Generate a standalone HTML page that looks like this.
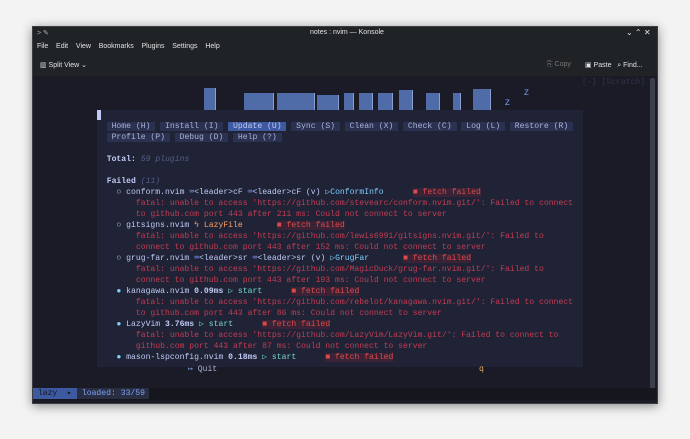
<!DOCTYPE html>
<html><head><meta charset="utf-8"><style>
*{margin:0;padding:0;box-sizing:border-box}
body{width:690px;height:439px;background:#f3f3f3;position:relative;overflow:hidden;font-family:"Liberation Sans","DejaVu Sans",sans-serif}
.win{position:absolute;left:32px;top:26px;width:626px;height:378px;background:#202326;box-shadow:0 2px 10px rgba(0,0,0,.45);border:1px solid #3a3e42}
.ui{position:absolute;color:#e0e2e4;font-size:7px;white-space:nowrap}
.term{position:absolute;left:33px;top:76px;width:624px;height:327px;background:#1a1b26;overflow:hidden}
.l{position:absolute;font-family:"Liberation Mono","DejaVu Sans Mono",monospace;font-size:8.1px;line-height:11px;white-space:pre;color:#a9b1d6}
.float{position:absolute;left:64px;top:34px;width:486px;height:257px;background:#1f2335}
.t{background:#2b3150;color:#a9b1d6}
.ta{background:#3d59a1;color:#c0caf5}
.n{color:#c0caf5}
.r{color:#c53b53}
.ff{background:#3b2235;color:#db4b4b}
.g{color:#73daca}
.c{color:#7dcfff}
.o{color:#ff9e64}
.b{color:#7aa2f7}
.dim{color:#565f89;font-style:italic}
.blk{position:absolute;background:#4f6ba8;border-right:1px solid #8aa0d0}
</style></head><body>
<div class="win"></div>
<div class="ui" style="left:37px;top:29px;color:#aaa">&gt; ✎</div>
<div class="ui" style="left:310px;top:29px">notes : nvim — Konsole</div>
<div class="ui" style="left:626px;top:28px;font-size:8px">⌄ ⌃ ✕</div>
<div class="ui" style="left:37px;top:43px">File&nbsp;&nbsp;&nbsp;&nbsp;Edit&nbsp;&nbsp;&nbsp;&nbsp;View&nbsp;&nbsp;&nbsp;&nbsp;Bookmarks&nbsp;&nbsp;&nbsp;&nbsp;Plugins&nbsp;&nbsp;&nbsp;&nbsp;Settings&nbsp;&nbsp;&nbsp;&nbsp;Help</div>
<div class="ui" style="left:40px;top:61px">▥ Split View ⌄</div>
<div class="ui" style="left:547px;top:61px;color:#777">⎘ Copy</div>
<div class="ui" style="left:585px;top:61px">▣ Paste&nbsp;&nbsp;&nbsp;⌕ Find...</div>
<div class="term">
 <div class="l" style="left:549px;top:1px;color:#2f3549">[-] [Scratch]</div>
 <div style="position:absolute;left:617px;top:2px;width:5px;height:322px;background:#3a3f4a;border-radius:2px"></div>
 <div class="blk" style="left:171px;top:12px;width:12px;height:22px"></div>
 <div class="blk" style="left:211px;top:17px;width:30px;height:17px"></div>
 <div class="blk" style="left:244px;top:17px;width:38px;height:17px"></div>
 <div class="blk" style="left:284px;top:19px;width:22px;height:15px"></div>
 <div class="blk" style="left:311px;top:17px;width:10px;height:17px"></div>
 <div class="blk" style="left:326px;top:17px;width:14px;height:17px"></div>
 <div class="blk" style="left:345px;top:17px;width:15px;height:17px"></div>
 <div class="blk" style="left:366px;top:14px;width:14px;height:20px"></div>
 <div class="blk" style="left:393px;top:17px;width:14px;height:17px"></div>
 <div class="blk" style="left:420px;top:17px;width:8px;height:17px"></div>
 <div class="blk" style="left:440px;top:13px;width:18px;height:21px"></div>
 <div class="l b" style="left:491px;top:12px">Z</div>
 <div class="l b" style="left:472px;top:22px">Z</div>
 <div class="float"></div>
 <div style="position:absolute;left:64px;top:34px;width:4px;height:10px;background:#c0caf5"></div>
 <div class="l" style="left:64px;top:45px">  <span class="t"> Home (H) </span> <span class="t"> Install (I) </span> <span class="ta"> Update (U) </span> <span class="t"> Sync (S) </span> <span class="t"> Clean (X) </span> <span class="t"> Check (C) </span> <span class="t"> Log (L) </span> <span class="t"> Restore (R) </span></div>
 <div class="l" style="left:64px;top:56px">  <span class="t"> Profile (P) </span> <span class="t"> Debug (D) </span> <span class="t"> Help (?) </span></div>
 <div class="l n" style="left:64px;top:78px">  <b>Total:</b> <span class="dim">59 plugins</span></div>
 <div class="l n" style="left:64px;top:100px">  <b>Failed</b> <span class="dim">(11)</span></div>
 <div class="l n" style="left:64px;top:111px">    ○ conform.nvim <span class="b">⌨</span>&lt;leader&gt;cF <span class="b">⌨</span>&lt;leader&gt;cF (v) <span class="c">▷ConformInfo</span>      <span class="ff">■ fetch failed</span></div>
 <div class="l r" style="left:64px;top:122px">        fatal: unable to access 'https://github.com/stevearc/conform.nvim.git/': Failed to connect</div>
 <div class="l r" style="left:64px;top:133px">        to github.com port 443 after 211 ms: Could not connect to server</div>
 <div class="l n" style="left:64px;top:144px">    ○ gitsigns.nvim <span class="o">ϟ LazyFile</span>       <span class="ff">■ fetch failed</span></div>
 <div class="l r" style="left:64px;top:155px">        fatal: unable to access 'https://github.com/lewis6991/gitsigns.nvim.git/': Failed to</div>
 <div class="l r" style="left:64px;top:166px">        connect to github.com port 443 after 152 ms: Could not connect to server</div>
 <div class="l n" style="left:64px;top:177px">    ○ grug-far.nvim <span class="b">⌨</span>&lt;leader&gt;sr <span class="b">⌨</span>&lt;leader&gt;sr (v) <span class="c">▷GrugFar</span>       <span class="ff">■ fetch failed</span></div>
 <div class="l r" style="left:64px;top:188px">        fatal: unable to access 'https://github.com/MagicDuck/grug-far.nvim.git/': Failed to</div>
 <div class="l r" style="left:64px;top:199px">        connect to github.com port 443 after 193 ms: Could not connect to server</div>
 <div class="l n" style="left:64px;top:210px">    <span class="c">●</span> kanagawa.nvim <b>0.09ms</b> <span class="g">▷ start</span>      <span class="ff">■ fetch failed</span></div>
 <div class="l r" style="left:64px;top:221px">        fatal: unable to access 'https://github.com/rebelot/kanagawa.nvim.git/': Failed to connect</div>
 <div class="l r" style="left:64px;top:232px">        to github.com port 443 after 86 ms: Could not connect to server</div>
 <div class="l n" style="left:64px;top:243px">    <span class="c">●</span> LazyVim <b>3.76ms</b> <span class="g">▷ start</span>      <span class="ff">■ fetch failed</span></div>
 <div class="l r" style="left:64px;top:254px">        fatal: unable to access 'https://github.com/LazyVim/LazyVim.git/': Failed to connect to</div>
 <div class="l r" style="left:64px;top:265px">        github.com port 443 after 87 ms: Could not connect to server</div>
 <div class="l n" style="left:64px;top:276px">    <span class="c">●</span> mason-lspconfig.nvim <b>0.18ms</b> <span class="g">▷ start</span>      <span class="ff">■ fetch failed</span></div>
 <div class="l" style="left:155px;top:288px;color:#7aa2f7">↦ <span style="color:#a9b1d6">Quit</span></div>
 <div class="l" style="left:446px;top:288px;color:#e0af68">q</div>
 <div style="position:absolute;left:0;top:312px;width:624px;height:12px;background:#16161e"></div>
 <div class="l" style="left:0;top:312px;background:#3d59a1;color:#15161e;width:44px"> lazy  ▸</div>
 <div class="l" style="left:44px;top:312px;background:#292e42;color:#7aa2f7;width:72px"> loaded: 33/59</div>
</div>
</body></html>
